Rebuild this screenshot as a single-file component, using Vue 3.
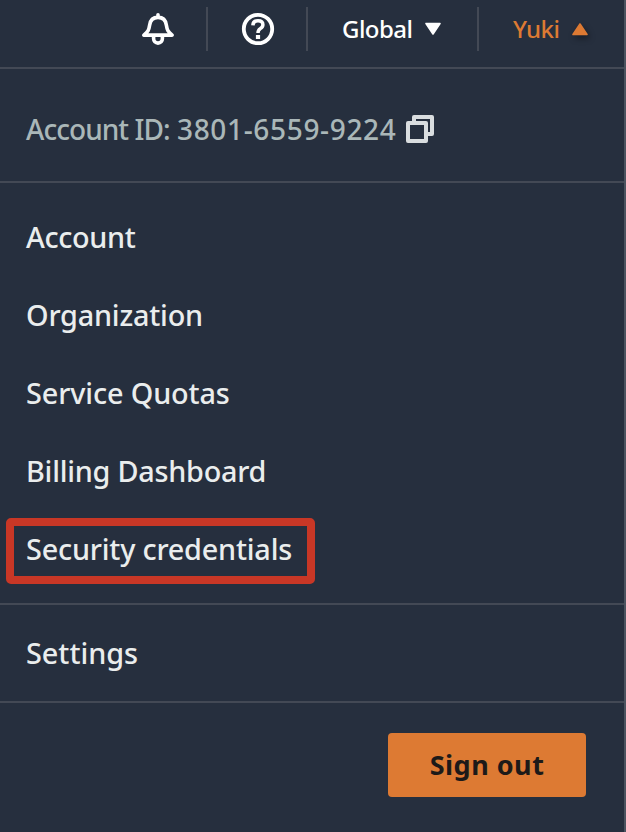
<script setup>
const items = [
  { label: 'Account', cls: 'account' },
  { label: 'Organization', cls: 'organization' },
  { label: 'Service Quotas', cls: 'quotas' },
  { label: 'Billing Dashboard', cls: 'billing' },
  { label: 'Security credentials', cls: 'security', marked: true },
]
</script>

<template>
  <div class="page">
    <header class="bar">
      <button class="cell bell" aria-label="Notifications">
        <svg width="34" height="34" viewBox="0 0 34 34" fill="none" stroke="#fff" stroke-width="3.6" stroke-linejoin="round">
          <path d="M17 2.800v2.500" stroke-linecap="round" />
          <path d="M2.800 23.100h28.400c-4.400-3.200-5.100-5.200-5.800-9.800C24.700 8 21.500 5.400 17 5.400S9.300 8 8.600 13.300c-.7 4.600-1.400 6.600-5.800 9.800z" />
          <path d="M12.600 24v2.600c0 2.600 1.800 4.500 4.400 4.500s4.400-1.900 4.400-4.500V24" />
        </svg>
      </button>
      <button class="cell help" aria-label="Help">
        <svg width="34" height="34" viewBox="0 0 34 34" fill="none" stroke="#fff" stroke-width="3.8">
          <circle cx="17" cy="17" r="14.200" />
          <path d="M11.900 13.400c.1-3 2-4.700 5.100-4.700 2.900 0 4.900 1.500 4.900 4 0 1.900-1.100 2.900-2.600 3.900-1.700 1.100-2.300 1.700-2.300 4.400" stroke-width="3.500" />
          <path d="M17 23v4" stroke-width="4.200" />
        </svg>
      </button>
      <button class="cell region">
        <span class="region-name">Global</span>
        <svg width="18" height="14" viewBox="0 0 18 14"><path d="M2 1.500h14L9 12z" fill="#fff" stroke="#fff" stroke-width="1.600" stroke-linejoin="round" /></svg>
      </button>
      <button class="cell user">
        <span class="user-name">Yuki</span>
        <svg class="up" width="18" height="14" viewBox="0 0 18 14"><path d="M2 12.500h14L9 2z" fill="#dd7a33" stroke="#dd7a33" stroke-width="1.600" stroke-linejoin="round" /></svg>
      </button>
    </header>

    <section class="account-id">
      <span class="id-label">Account ID:</span>
      <span class="id-number">3801-6559-9224</span>
      <svg width="30" height="30" viewBox="0 0 30 30" fill="none" stroke="#d9dddf" stroke-width="4" stroke-linejoin="round">
        <path d="M9 8V3h18v17h-5" />
        <path d="M3 9h18v18H3z" />
      </svg>
    </section>

    <nav class="menu">
      <a v-for="item in items" :key="item.label" class="item" :class="{ marked: item.marked }">
        <span :class="item.cls">{{ item.label }}</span>
      </a>
    </nav>

    <section class="settings"><a class="item"><span>Settings</span></a></section>

    <footer class="foot"><button class="signout"><span>Sign out</span></button></footer>
  </div>
</template>

<style>
body {
  background: #262f3e;
}
</style>

<style scoped>
.page {
  box-sizing: border-box;
  width: 626px;
  height: 832px;
  display: flex;
  flex-direction: column;
  overflow: hidden;
  background: #262f3e;
  border-right: 2px solid #4b535f;
  font-family: "Noto Sans", "Open Sans", sans-serif;
  font-weight: 500;
}
svg {
  display: block;
  flex: none;
}
button {
  font: inherit;
  color: inherit;
  border: 0;
  padding: 0;
  margin: 0;
  background: none;
}
.bar {
  box-sizing: border-box;
  height: 69px;
  flex: none;
  display: flex;
  padding-top: 7px;
  border-bottom: 2px solid #434955;
  font-size: 24px;
  color: #fff;
}
.cell {
  box-sizing: border-box;
  height: 44px;
  display: flex;
  align-items: center;
  border-right: 2px solid #434955;
  line-height: 44px;
  white-space: nowrap;
}
.bell {
  width: 208px;
  padding-left: 141px;
}
.help {
  width: 100px;
  padding-left: 33px;
}
.region {
  width: 171px;
  padding-left: 34px;
}
.region-name {
  width: 82px;
  text-align: left;
  font-weight: 550;
  letter-spacing: -0.55px;
}
.user {
  border: 0;
  padding-left: 34px;
  color: #dd7a33;
}
.user-name {
  width: 58px;
  text-align: left;
  letter-spacing: -0.4px;
}
.up {
  overflow: visible;
  filter: drop-shadow(2px 3px 3px rgba(0, 0, 0, 0.4));
}
.account-id {
  box-sizing: border-box;
  height: 114px;
  flex: none;
  display: flex;
  align-items: center;
  padding: 8px 0 0 26px;
  border-bottom: 2px solid #434955;
  font-size: 28px;
  color: #aab7b8;
  white-space: nowrap;
}
.id-label {
  width: 151px;
  letter-spacing: -0.95px;
}
.id-number {
  width: 228px;
  letter-spacing: 0.66px;
}
.menu {
  box-sizing: border-box;
  height: 422px;
  flex: none;
  padding-top: 15px;
  border-bottom: 2px solid #434955;
}
.item {
  box-sizing: border-box;
  display: flex;
  align-items: center;
  height: 78px;
  padding-left: 26px;
  font-size: 28.8px;
  line-height: 40px;
  color: #eaeded;
  white-space: nowrap;
}
.account {
  letter-spacing: -0.35px;
}
.organization {
  letter-spacing: -0.2px;
}
.quotas {
  letter-spacing: -0.12px;
}
.billing {
  letter-spacing: -0.24px;
}
.security {
  letter-spacing: -0.2px;
}
.marked {
  width: 309px;
  height: 66px;
  margin: 8px 0 0 6px;
  padding: 0 0 4px 12px;
  border: 8px solid #c83726;
  border-radius: 5px;
}
.settings {
  box-sizing: border-box;
  height: 98px;
  flex: none;
  padding-top: 9px;
  border-bottom: 2px solid #434955;
}
.foot {
  display: flex;
  justify-content: flex-end;
  padding: 30px 38px 0 0;
}
.signout {
  width: 198px;
  height: 64px;
  padding-bottom: 2px;
  border-radius: 4px;
  background: #dd7a33;
  color: #1d1a19;
  font-size: 27px;
  font-weight: 700;
  letter-spacing: 0.5px;
}
</style>
